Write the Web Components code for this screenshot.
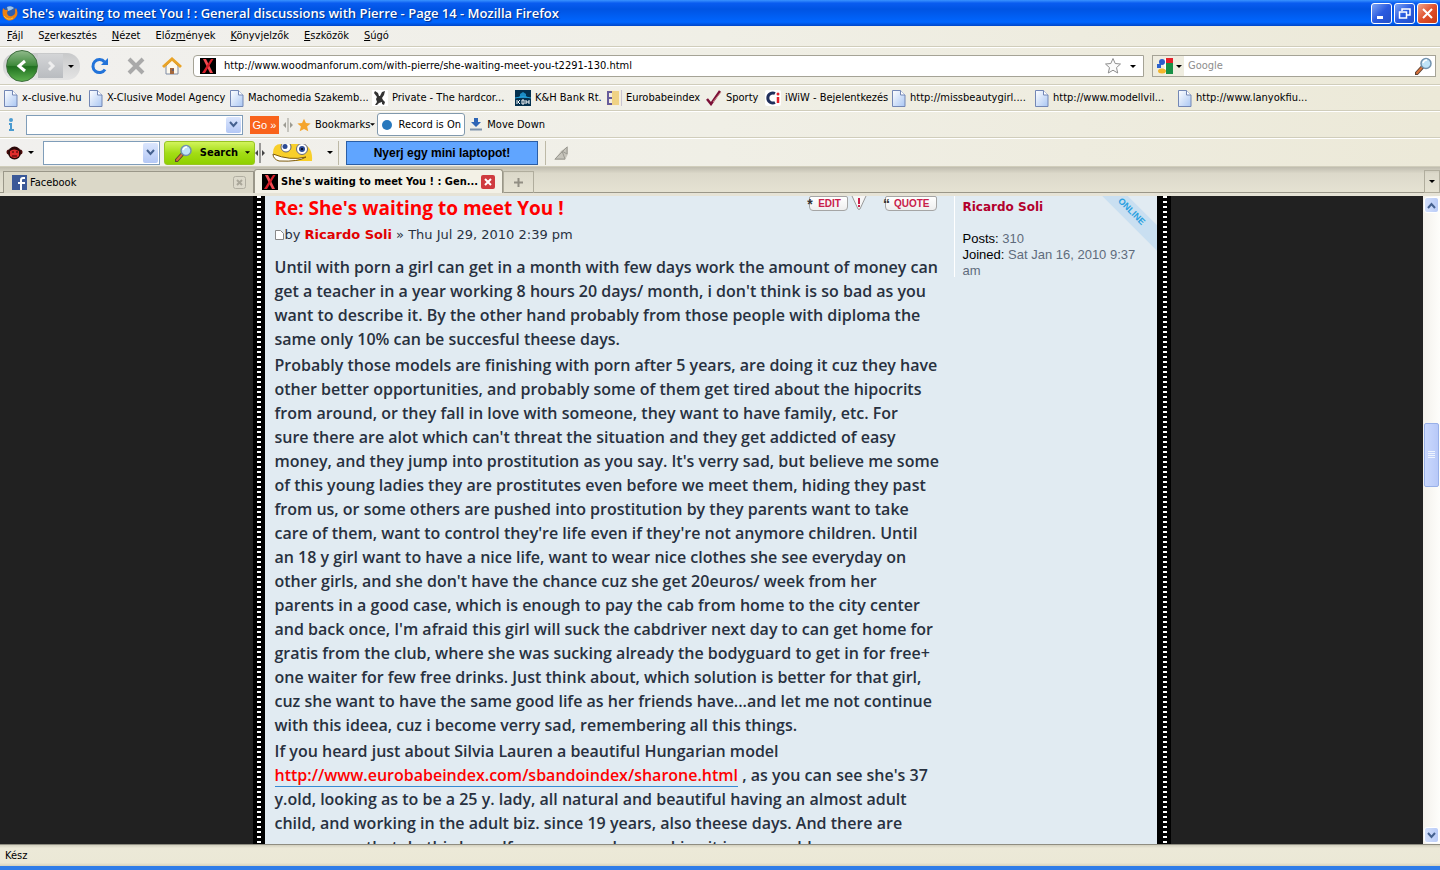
<!DOCTYPE html>
<html lang="hu">
<head>
<meta charset="utf-8">
<title>She's waiting to meet You ! : General discussions with Pierre - Page 14 - Mozilla Firefox</title>
<style>
    html, body { height: 100%; }
    body {
        margin: 0;
        overflow: hidden;
        --ui: "DejaVu Sans Condensed", "DejaVu Sans", sans-serif;
        --chrome: #efede0;
        --line: #d0cdbb;
        --ink: #28313f;
        --red: #f00;
        --box: #7f9db9;
        font: 11px/14px "Noto Sans", sans-serif;
        color: #000;
    }
</style>
</head>
<body>
<browser-window>
    <window-title slot="chrome">She's waiting to meet You ! : General discussions with Pierre - Page 14 - Mozilla Firefox</window-title>
    <menu-bar slot="chrome"></menu-bar>
    <nav-bar slot="chrome"></nav-bar>
    <bookmark-bar slot="chrome">
        <book-mark>x-clusive.hu</book-mark>
        <book-mark>X-Clusive Model Agency</book-mark>
        <book-mark>Machomedia Szakemb...</book-mark>
        <book-mark icon="rabbit">Private - The hardcor...</book-mark>
        <book-mark icon="kh">K&amp;H Bank Rt.</book-mark>
        <book-mark icon="euro">Eurobabeindex</book-mark>
        <book-mark icon="tick">Sporty</book-mark>
        <book-mark icon="iwiw">iWiW - Bejelentkezés</book-mark>
        <book-mark>http://missbeautygirl....</book-mark>
        <book-mark>http://www.modellvil...</book-mark>
        <book-mark>http://www.lanyokfiu...</book-mark>
    </bookmark-bar>
    <record-bar slot="chrome"></record-bar>
    <search-bar slot="chrome"></search-bar>
    <tab-strip slot="chrome"></tab-strip>
    <forum-page>
        <forum-post>
            <span slot="subject">Re: She's waiting to meet You !</span>
            <span slot="author">Ricardo Soli</span>
            <span slot="date">Thu Jul 29, 2010 2:39 pm</span>
            <post-text>Until with porn a girl can get in a month with few days work the amount of money can
get a teacher in a year working 8 hours 20 days/ month, i don't think is so bad as you
want to describe it. By the other hand probably from those people with diploma the
same only 10% can be succesful theese days.</post-text>
            <post-text>Probably those models are finishing with porn after 5 years, are doing it cuz they have
other better opportunities, and probably some of them get tired about the hipocrits
from around, or they fall in love with someone, they want to have family, etc. For
sure there are alot which can't threat the situation and they get addicted of easy
money, and they jump into prostitution as you say. It's verry sad, but believe me some
of this young ladies they are prostitutes even before we meet them, hiding they past
from us, or some others are pushed into prostitution by they parents want to take
care of them, want to control they're life even if they're not anymore children. Until
an 18 y girl want to have a nice life, want to wear nice clothes she see everyday on
other girls, and she don't have the chance cuz she get 20euros/ week from her
parents in a good case, which is enough to pay the cab from home to the city center
and back once, I'm afraid this girl will suck the cabdriver next day to can get home for
gratis from the club, where she was sucking already the bodyguard to get in for free+
one waiter for few free drinks. Just think about, which solution is better for that girl,
cuz she want to have the same good life as her friends have...and let me not continue
with this ideea, cuz i become verry sad, remembering all this things.</post-text>
            <post-text>If you heard just about Silvia Lauren a beautiful Hungarian model
<post-link>http://www.eurobabeindex.com/sbandoindex/sharone.html</post-link> , as you can see she's 37
y.old, looking as to be a 25 y. lady, all natural and beautiful having an almost adult
child, and working in the adult biz. since 19 years, also theese days. And there are
some more that do this herself, even now when making it in some old ages</post-text>
        </forum-post>
        <user-profile slot="profile" name="Ricardo Soli" posts="310" joined="Sat Jan 16, 2010 9:37 am"></user-profile>
    </forum-page>
    <scroll-bar slot="scroll"></scroll-bar>
    <status-bar slot="status">Kész</status-bar>
</browser-window>

<script>
// Small helper: one class per element, markup and styles in its shadow root
function element(name, css, html) {
    const template = document.createElement('template');
    customElements.define(name, class extends HTMLElement {
        constructor() {
            super();
            template.innerHTML = `<style>:host, * { box-sizing: border-box; } ${css}</style>` +
                (typeof html === 'function' ? html(this) : html);
            this.attachShadow({ mode: 'open' }).appendChild(template.content.cloneNode(true));
        }
    });
}

const CONTROL = `
    button, input { font: inherit; color: inherit; margin: 0; padding: 0; border: 0; background: none; border-radius: 0; outline: 0; }
    button { display: flex; align-items: center; justify-content: center; white-space: nowrap; flex: none; }
    svg { display: block; flex: none; }
`;

const ARROW = '<svg width="6" height="3" viewBox="0 0 6 3"><path d="M0 0h6L3 3z" fill="#000"/></svg>';
const CHEVRON = '<svg width="9" height="7" viewBox="0 0 9 7"><path d="M1 1l3.500 4L8 1" fill="none" stroke="#45618f" stroke-width="2"/></svg>';
const LENS = `<svg width="18" height="18" viewBox="0 0 18 18">
    <path d="M1.500 16.500L7 10.500" stroke="#5d4334" stroke-width="4" stroke-linecap="round"/>
    <path d="M2 16l4.500-5" stroke="#d9713a" stroke-width="2" stroke-linecap="round"/>
    <circle cx="11" cy="6.500" r="5" fill="#bfe3f8" stroke="#7292ae" stroke-width="1.500"/>
    <path d="M8 6q1-3 4-3" fill="none" stroke="#fff" stroke-width="1.500"/></svg>`;
const XICON = `<svg width="16" height="16" viewBox="0 0 16 16"><path d="M0 0h16v16H0z"/>
    <path d="M3 1h3l7 14h-3z" fill="#f24a50"/><path d="M11 1h2.500L5 15H2z" fill="#d51d28"/></svg>`;

const ICONS = {
    page: `<svg width="14" height="17" viewBox="0 0 14 17"><defs><linearGradient id="p" x2="1" y2="1"><stop stop-color="#fff"/><stop offset="1" stop-color="#a9c6f3"/></linearGradient></defs>
        <path d="M.5.500h8l4.500 4.500v11.500H.500z" fill="url(#p)" stroke="#7387b5"/><path d="M8.500.500V5H13" fill="#fff" stroke="#7387b5"/></svg>`,
    rabbit: `<svg width="16" height="16" viewBox="0 0 16 16"><path fill="#fff" d="M0 0h16v16H0z"/>
        <path d="M3 1l3 2 1 3h1l2-4 3-1-1 4-2 3 1 2 2 2-1 3-2-1v-2l-3 1-2 2H3l2-3-1-3 1-2-3-4z" fill="#333"/></svg>`,
    kh: `<svg width="16" height="16" viewBox="0 0 16 16"><path fill="#04304e" d="M0 0h16v16H0z"/>
        <path d="M5 6V4l3-2 3 2v2l2 2H3z" fill="#1c8cc4"/><path d="M0 8q8-3 16 0" fill="none" stroke="#22a0d8"/>
        <path d="M2 10v4M5 10l-2 2 2 2M7 10h2v4H7zM11 10v4M14 10v4M11 12h3" fill="none" stroke="#fff"/></svg>`,
    euro: `<svg width="16" height="16" viewBox="0 0 16 16"><path fill="#f4eee0" d="M0 0h16v16H0z"/><path fill="#efd285" d="M6 1h7v14H6z"/>
        <path d="M6 2H2v12h4M2 8h4" fill="none" stroke="#665c9b" stroke-width="2"/><path d="M15.500 0v16" stroke="#c9c4d2"/></svg>`,
    tick: `<svg width="16" height="16" viewBox="0 0 16 16"><path d="M1 9l4 5L14 1" fill="none" stroke="#7c1037" stroke-width="2.500"/><path d="M7 12l8-10" stroke="#c88" /></svg>`,
    iwiw: `<svg width="16" height="16" viewBox="0 0 16 16"><rect width="16" height="16" rx="2" fill="#fff"/>
        <path d="M10 3.500a5 5 0 1 0 0 9" fill="none" stroke="#202f5c" stroke-width="3"/><path d="M13 7v6" stroke="#e3202b" stroke-width="2.500"/><circle cx="13" cy="4" r="1.500" fill="#e3202b"/></svg>`
};

element('browser-window', `
    :host { display: flex; flex-direction: column; height: 100vh; background: var(--chrome); }
    .chrome { flex: none; background: linear-gradient(90deg, #f1f0ee, #f0efe6 50%, #ece9d8); }
    .view { flex: 1; min-height: 0; display: flex; }
    .view ::slotted(forum-page) { flex: 1; min-width: 0; }
`, `
    <div class="chrome"><slot name="chrome"></slot></div>
    <div class="view"><slot></slot><slot name="scroll"></slot></div>
    <slot name="status"></slot>
`);

element('window-title', CONTROL + `
    :host {
        display: flex; align-items: center; gap: 4px; height: 26px; padding: 0 2px;
        background: linear-gradient(#3a93ff, #0a5cf0 12%, #0054e3 35%, #0066ff 85%, #0046c8);
        color: #fff; font: 600 13px/20px "Open Sans", sans-serif; text-shadow: 1px 1px 1px #062b80;
    }
    h1 { flex: 1; margin: 0; font: inherit; white-space: nowrap; overflow: hidden; }
    .keys { display: flex; gap: 2px; }
    button { width: 21px; height: 21px; border: 1px solid #fff; border-radius: 3px; background: linear-gradient(135deg, #7ea5f4, #2a5be0 50%, #2450c8); }
    .close { background: linear-gradient(135deg, #f0a58c, #e0502c 50%, #c83a14); }
`, `
    <svg width="16" height="16" viewBox="0 0 16 16"><circle cx="8" cy="8" r="7" fill="#2f5fae"/><path d="M5 2q4-2 7 1l-3 2-3 1z" fill="#9cc6ef"/>
        <path d="M1 3l2 2 3 0-1 3q1 4 5 3 4-1 3-6l1-2q3 5 0 9-4 5-9 3-6-3-4-12z" fill="#ee8211"/><path d="M2 11q4 5 9 2" fill="none" stroke="#f7c33a"/></svg>
    <h1><slot></slot></h1>
    <div class="keys">
        <button aria-label="Minimize"><svg width="13" height="13"><path d="M2 10.500h6" stroke="#fff" stroke-width="3"/></svg></button>
        <button aria-label="Restore"><svg width="13" height="13"><path d="M4 4V2h8v6H9M1.500 5h7v6h-7z" fill="none" stroke="#fff" stroke-width="1.500"/></svg></button>
        <button class="close" aria-label="Close"><svg width="13" height="13"><path d="M2 2l9 9M11 2l-9 9" stroke="#fff" stroke-width="2"/></svg></button>
    </div>
`);

element('menu-bar', CONTROL + `
    :host { display: flex; gap: 15px; height: 21px; padding-left: 7px; border-bottom: 1px solid var(--line); font: 11px/14px var(--ui); }
    button { height: 20px; }
    u { text-underline-offset: 1px; }
`, `
    <button><span><u>F</u>ájl</span></button>
    <button><span>S<u>z</u>erkesztés</span></button>
    <button><span><u>N</u>ézet</span></button>
    <button><span>Előz<u>m</u>ények</span></button>
    <button><span><u>K</u>önyvjelzők</span></button>
    <button><span><u>E</u>szközök</span></button>
    <button><span><u>S</u>úgó</span></button>
`);

element('nav-bar', CONTROL + `
    :host { display: flex; align-items: center; height: 38px; padding: 0 4px 0 3px; border-top: 1px solid #fff; border-bottom: 1px solid var(--line); }
    .travel { display: flex; align-items: center; width: 77px; height: 27px; border-radius: 13px; background: linear-gradient(#c8c9ca, #e4e4e4); }
    .back { width: 32px; height: 32px; margin-left: 3px; border: 1px solid #3d6e3c; border-radius: 50%; background: linear-gradient(#8fb98a, #3f8a3c 48%, #1f701f 52%, #5cb04e); }
    .forward { width: 25px; height: 24px; background: linear-gradient(#d4d5d7, #b9bcc0); }
    .drop { width: 16px; height: 24px; }
    .tools { display: flex; gap: 16px; padding: 0 11px 0 10px; }
    .tools button { width: 20px; height: 22px; }
    form { display: flex; align-items: center; height: 22px; border: 1px solid #a5a396; background: #fff; }
    .url { flex: 1; border-radius: 4px 0 0 4px; padding-left: 6px; }
    .url input { flex: 1; min-width: 0; margin-left: 8px; }
    .url button { width: 20px; height: 20px; }
    .find { width: 284px; margin-left: 8px; padding-right: 2px; }
    .engine { gap: 3px; width: 31px; height: 20px; padding-left: 2px; background: #efede0; }
    .find input { flex: 1; min-width: 0; padding-left: 4px; color: #000; }
    input { font: 11px/14px var(--ui); }
    input::placeholder { color: #8d8d8d; opacity: 1; }
`, `
    <div class="travel">
        <button class="back" aria-label="Back"><svg width="16" height="16"><path d="M11 3L5 8l6 5" fill="none" stroke="#fff" stroke-width="3"/></svg></button>
        <button class="forward" aria-label="Forward"><svg width="12" height="12"><path d="M4 2l4 4-4 4" fill="none" stroke="#eee" stroke-width="3"/></svg></button>
        <button class="drop" aria-label="History">${ARROW}</button>
    </div>
    <div class="tools">
        <button aria-label="Reload"><svg width="18" height="18" viewBox="0 0 18 18"><path d="M14 12.500A6.500 6.500 0 1 1 13.500 5" fill="none" stroke="#2273d9" stroke-width="3"/><path d="M17 1v7h-7z" fill="#2273d9"/></svg></button>
        <button aria-label="Stop"><svg width="18" height="18"><path d="M2 2l14 14M16 2L2 16" stroke="#a9a9a9" stroke-width="4"/></svg></button>
        <button aria-label="Home"><svg width="20" height="18" viewBox="0 0 20 18"><path d="M4 9v8h12V9l-6-6z" fill="#fdf8ec" stroke="#7c8ba5"/><path d="M1 10l9-8 9 8" fill="none" stroke="#e9a326" stroke-width="3"/><path d="M8 11h4v6H8z" fill="#a4683c"/><path d="M10.500 12h1v2h-1z" fill="#2b4f9a"/></svg></button>
    </div>
    <form class="url">${XICON}
        <input type="text" aria-label="Address" value="http://www.woodmanforum.com/with-pierre/she-waiting-meet-you-t2291-130.html">
        <button type="button" aria-label="Bookmark"><svg width="18" height="18" viewBox="0 0 18 18"><path d="M9 1.500l2.200 5 5.300.500-4 3.600 1.200 5.400L9 13.200 4.300 16l1.200-5.400-4-3.600 5.300-.500z" fill="#fbfbfb" stroke="#8e8e8e"/></svg></button>
        <button type="button" aria-label="Suggestions">${ARROW}</button>
    </form>
    <form class="find">
        <button type="button" class="engine" aria-label="Search engine"><svg width="16" height="16" viewBox="0 0 16 16"><path d="M9 0h7v5H9z" fill="#e4202a"/><path d="M9 5h7v11H9z" fill="#179045"/><path d="M9 0v16l-3-3 2-4-3-4z" fill="#fff"/><path d="M0 6h4v4H0z" fill="#2c63cd"/><circle cx="5" cy="4" r="3" fill="#2c5ccc"/><ellipse cx="5" cy="13" rx="4" ry="2.500" fill="#f3b62c"/></svg>${ARROW}</button>
        <input type="text" aria-label="Search" placeholder="Google">
        <button type="button" aria-label="Go">${LENS}</button>
    </form>
`);

element('bookmark-bar', `
    :host {
        display: grid; align-items: center; height: 26px; padding-left: 4px;
        grid-template-columns: 85px 141px 142px 143px 91px 100px 59px 127px 143px 143px auto;
        border-top: 1px solid #fff; border-bottom: 1px solid var(--line);
    }
`, '<slot></slot>');

element('book-mark', `
    :host { display: block; min-width: 0; }
    a { display: flex; align-items: center; gap: 4px; color: #000; text-decoration: none; white-space: nowrap; font: 11px/14px var(--ui); }
    svg { flex: none; }
`, host => `<a href="#">${ICONS[host.getAttribute('icon') || 'page']}<slot></slot></a>`);

element('record-bar', CONTROL + `
    :host { display: flex; align-items: center; height: 27px; padding-left: 4px; border-top: 1px solid #fff; border-bottom: 1px solid var(--line); font: 11px/14px var(--ui); }
    .info { width: 14px; margin-right: 8px; }
    .combo { display: flex; align-items: center; width: 217px; height: 20px; border: 1px solid var(--box); background: #fff; }
    .combo input { flex: 1; min-width: 0; }
    .combo button { width: 15px; height: 16px; margin-right: 1px; background: linear-gradient(#dbe6fd, #b4c8f5); border-radius: 2px; }
    .go { width: 29px; height: 18px; margin: 0 4px 0 7px; background: #f9631b; color: #fff; font: 11px/14px "Liberation Sans", sans-serif; }
    .marks { gap: 4px; margin: 0 2px 0 4px; }
    .marks span { display: flex; align-items: center; }
    .record { gap: 7px; width: 88px; height: 23px; margin-right: 5px; border: 1px solid #8199ad; border-radius: 3px; background: #fff; }
    .move { gap: 5px; }
`, `
    <svg class="info" width="14" height="14"><path d="M7 5v8M5 6h2M5 12h5" stroke="#4b9bd0" stroke-width="2"/><circle cx="7" cy="2" r="2" fill="#4b9bd0"/></svg>
    <div class="combo"><input type="text" aria-label="Toolbar address"><button aria-label="Open list">${CHEVRON}</button></div>
    <button class="go">Go »</button>
    <svg width="10" height="14"><path d="M5 0v14" stroke="#9c9b92"/><path d="M3 4v6L0 7zM7 4v6l3-3z" fill="#9c9b92"/></svg>
    <button class="marks"><svg width="14" height="14" viewBox="0 0 18 18"><path d="M9 1l2.500 5.500 6 .5-4.500 4 1.500 6L9 14l-5.500 3L5 11 .5 7l6-.5z" fill="#f5a52c"/></svg><span>Bookmarks<svg width="5" height="3" viewBox="0 0 6 3"><path d="M0 0h6L3 3z"/></svg></span></button>
    <button class="record"><svg width="10" height="10"><circle cx="5" cy="5" r="5" fill="#2878bd"/></svg><span>Record is On</span></button>
    <button class="move"><svg width="12" height="13"><path d="M4 0h4v4h3l-5 5-5-5h3z" fill="#2f66b6"/><path d="M0 11.500h12" stroke="#7d93ac" stroke-width="2"/></svg><span>Move Down</span></button>
`);

element('search-bar', CONTROL + `
    :host { display: flex; align-items: center; height: 29px; padding-left: 6px; border-top: 1px solid #fff; border-bottom: 1px solid var(--line); }
    .drop { width: 16px; height: 22px; }
    .combo { display: flex; align-items: center; width: 117px; height: 24px; margin: 0 4px; border: 1px solid var(--box); background: #fff; }
    .combo input { flex: 1; min-width: 0; }
    .combo button { width: 15px; height: 20px; margin-right: 1px; background: linear-gradient(#dbe6fd, #b4c8f5); border-radius: 2px; }
    .search { justify-content: space-between; width: 91px; height: 24px; padding: 0 4px 0 10px; border: 1px solid #98c521; border-radius: 3px; background: linear-gradient(#d2f35c, #a3dd15 50%, #8fd000); font: 700 11px/14px var(--ui); }
    .face { margin: 0 8px 0 7px; }
    .ad { display: flex; align-items: center; justify-content: center; width: 192px; height: 24px; margin: 0 7px; border: 1px solid #2a5ea6; background: #60a5ff; color: #000; text-decoration: none; font: 700 12px/14px "Liberation Sans", sans-serif; }
    .rule { width: 1px; height: 24px; background: #bdb9a6; }
    .fan { margin-left: 8px; }
`, `
    <svg width="17" height="16" viewBox="0 0 17 16"><circle cx="3" cy="7" r="2.500" fill="#4c0b0b"/><circle cx="14" cy="7" r="2.500" fill="#4c0b0b"/><circle cx="8.500" cy="8" r="6.500" fill="#2b0808"/><path d="M4 6q4-3 9 0v5q-4 4-9 0z" fill="#e02c2c"/><path d="M6 7h2M10 7h2M6 11h5" stroke="#300"/></svg>
    <button class="drop" aria-label="Menu">${ARROW}</button>
    <div class="combo"><input type="text" aria-label="Search words"><button aria-label="Open list">${CHEVRON}</button></div>
    <button class="search">${LENS}<span>Search</span><svg width="5" height="3" viewBox="0 0 6 3"><path d="M0 0h6L3 3z"/></svg></button>
    <svg width="10" height="20"><path d="M5 0v20" stroke="#444"/><path d="M3 7v6l-3-3zM7 7v6l3-3z" fill="#444"/></svg>
    <svg class="face" width="42" height="18" viewBox="0 0 42 18"><path d="M1 9Q1 0 9 0h22q10 3 9 17h-6L6 17z" fill="#f8cf2a"/><path d="M1 10q17 7 33 3-7 5-27 4-6-2-6-7z" fill="#fff" stroke="#7c5a0c"/><circle cx="14" cy="3" r="5" fill="#fff" stroke="#667"/><circle cx="30" cy="5" r="5.500" fill="#fff" stroke="#667"/><circle cx="13" cy="2.500" r="2.500" fill="#2b4a94"/><circle cx="30" cy="5" r="3" fill="#2b4a94"/><circle cx="30" cy="5" r="1"/></svg>
    <button class="drop" aria-label="Emoticons">${ARROW}</button>
    <span class="rule"></span>
    <a class="ad" href="#">Nyerj egy mini laptopot!</a>
    <span class="rule"></span>
    <svg class="fan" width="16" height="16"><path d="M0 15L7 6l7-5v8l-3 6z" fill="#c6c4bb"/><path d="M1 14L13 2v7l-5-3M8 6l3 8H1" fill="none" stroke="#9b9a92"/></svg>
`);

element('tab-strip', CONTROL + `
    :host { display: flex; align-items: flex-end; height: 29px; padding-left: 3px; background: linear-gradient(#bfbcae, #dcd9ca 25%, #e6e3d3); border-bottom: 3px solid #e6e3d6; box-shadow: inset 0 -1px #9a9789; font: 11px/14px var(--ui); }
    a { display: flex; align-items: center; height: 22px; padding: 0 7px 0 8px; border: 1px solid #9a9789; border-bottom: 0; color: #000; text-decoration: none; white-space: nowrap; }
    span { flex: 1; margin-left: 3px; }
    .idle { width: 251px; background: #dbd8c8; }
    .active { width: 249px; height: 24px; padding-left: 7px; border-radius: 3px 3px 0 0; background: #f3f1e6; font-weight: 700; }
    .new { width: 31px; height: 22px; border: 1px solid #b0ad9d; border-bottom: 0; }
    .list { width: 16px; height: 23px; margin-left: auto; border: 1px solid #b0ad9d; }
`, `
    <a class="idle" href="#"><svg width="15" height="15"><path d="M0 0h15v15H0z" fill="#3b5998"/><path d="M13 3h-2q-2 0-2 2v10M6 8h7" fill="none" stroke="#fff" stroke-width="2"/></svg><span>Facebook</span>
        <svg width="13" height="13"><rect x=".5" y=".5" width="12" height="12" rx="2" fill="#dcd9cb" stroke="#b1aea1"/><path d="M4 4l5 5M9 4L4 9" stroke="#aaa79a" stroke-width="2"/></svg></a>
    <a class="active" href="#">${XICON}<span>She's waiting to meet You ! : Gen...</span>
        <svg width="14" height="14"><rect width="14" height="14" rx="2" fill="#cf3b3f"/><path d="M4 4l6 6M10 4l-6 6" stroke="#fff" stroke-width="2"/></svg></a>
    <button class="new" aria-label="New tab"><svg width="9" height="9"><path d="M4.500 0v9M0 4.500h9" stroke="#918e83" stroke-width="2"/></svg></button>
    <button class="list" aria-label="List tabs">${ARROW}</button>
`);

element('forum-page', `
    :host { display: flex; justify-content: center; overflow: hidden; background: #212121; }
    .sheet { display: grid; grid-template-columns: minmax(0, 1fr) 203px; width: 918px; padding: 0 14px 0 12px; position: relative; background: linear-gradient(#e1ebf2, #e1ebf2) content-box, #000; }
    .film { position: absolute; top: 0; bottom: 0; width: 4px; background: repeating-linear-gradient(#fff 0 2px, #000 2px 5px); }
    .left { left: 4px; }
    .right { right: 4px; }
`, `
    <div class="sheet">
        <slot></slot><slot name="profile"></slot>
        <i class="film left"></i><i class="film right"></i>
    </div>
`);

element('forum-post', CONTROL + `
    :host { display: block; padding: 0 17px 0 10px; }
    header { display: flex; align-items: flex-start; height: 29px; }
    h2 { flex: 1; margin: 0; color: var(--red); font: 700 19px/24px "Open Sans", sans-serif; }
    .keys { display: flex; gap: 3px; font: 700 10px/14px "Liberation Sans", sans-serif; color: #c8204a; }
    .keys button { position: relative; height: 15px; padding: 0 6px 0 8px; border: 1px solid #a5a5a5; border-radius: 2px 2px 4px 4px; background: linear-gradient(#fff, #eee); color: inherit; }
    .keys .report { border: 0; background: none; padding: 0; }
    .keys .quote { margin-left: 14px; }
    .mark { position: absolute; left: -3px; top: -1px; color: #333; font-size: 14px; line-height: 16px; }
    .by { display: flex; align-items: center; gap: 1px; height: 20px; margin: 0 0 10px; color: var(--ink); font: 13px/20px "DejaVu Sans", sans-serif; }
    .by a { color: #e00000; font-weight: 700; text-decoration: none; }
    .by span { white-space: pre; }
`, `
    <header>
        <h2><slot name="subject"></slot></h2>
        <div class="keys">
            <button><span class="mark">*</span>EDIT</button>
            <button class="report" aria-label="Report"><svg width="17" height="15"><path d="M1 0l6 13q1 1 2 0L15 0" fill="#f6f6f6" stroke="#999"/><path d="M8 2v6M8 9v2" stroke="#c8204a" stroke-width="2"/></svg></button>
            <button class="quote"><span class="mark">“</span>QUOTE</button>
        </div>
    </header>
    <p class="by"><svg width="9" height="10"><path d="M.5.500h5l3 3v6h-8z" fill="#fff" stroke="#888"/></svg><span>by <a href="#"><slot name="author"></slot></a> » <slot name="date"></slot></span></p>
    <slot></slot>
`);

element('post-text', `
    :host { display: block; margin-bottom: 2px; white-space: pre; color: var(--ink); font: 600 16px/24px "Open Sans", sans-serif; }
`, '<slot></slot>');

element('post-link', `
    a { color: var(--red); text-decoration: none; border-bottom: 1px solid #368ad2; }
`, '<a href="#"><slot></slot></a>');

element('user-profile', `
    :host { display: block; position: relative; height: 81px; padding: 1px 20px 0 8px; border-left: 1px solid #fff; overflow: hidden; color: #000; font: 13px/16px "Liberation Sans", sans-serif; }
    a { display: block; margin: 2px 0 16px; color: #b3002d; font: 700 12px/16px "DejaVu Sans", sans-serif; text-decoration: none; }
    p { margin: 0; }
    span { color: #5f6b7c; }
    .online { position: absolute; right: -24px; top: 7px; width: 100px; height: 18px; transform: rotate(45deg); background: #c9dff1; color: #2a9fe0; font: 700 9px/17px "Liberation Sans", sans-serif; text-align: center; }
`, host => `
    <a href="#">${host.getAttribute('name')}</a>
    <p>Posts: <span>${host.getAttribute('posts')}</span></p>
    <p>Joined: <span>${host.getAttribute('joined')}</span></p>
    <div class="online">ONLINE</div>
`);

element('scroll-bar', CONTROL + `
    :host { display: flex; flex-direction: column; width: 17px; padding: 1px; background: linear-gradient(90deg, #f3f1ec, #fefefb); }
    button { width: 15px; height: 16px; border: 1px solid #fff; border-radius: 3px; background: linear-gradient(90deg, #d3e0fc, #b9cbf6); }
    .track { flex: 1; display: flex; flex-direction: column; }
    .before { flex: 210; }
    .thumb { flex: 62; display: flex; align-items: center; justify-content: center; border: 1px solid #98b0e8; border-radius: 2px; background: linear-gradient(90deg, #cbd9fd, #b8c9f8); }
    .after { flex: 340; }
`, `
    <button aria-label="Up"><svg width="9" height="7" viewBox="0 0 9 7"><path d="M1 6l3.500-4L8 6" fill="none" stroke="#45618f" stroke-width="2"/></svg></button>
    <div class="track">
        <div class="before"></div>
        <div class="thumb"><svg width="7" height="8"><path d="M0 .5h7M0 2.500h7M0 4.500h7M0 6.500h7" stroke="#eef4fe"/></svg></div>
        <div class="after"></div>
    </div>
    <button aria-label="Down">${CHEVRON}</button>
`);

element('status-bar', `
    :host { display: block; flex: none; height: 26px; padding: 4px 5px 0; border-top: 1px solid #8f8d81; border-bottom: 4px solid #2f7ce8; background: linear-gradient(#d3d0bf, #ece9d8 15%, #ebe8d6 85%, #d5d1bc); font: 11px/14px var(--ui); }
`, '<slot></slot>');
</script>
</body>
</html>
